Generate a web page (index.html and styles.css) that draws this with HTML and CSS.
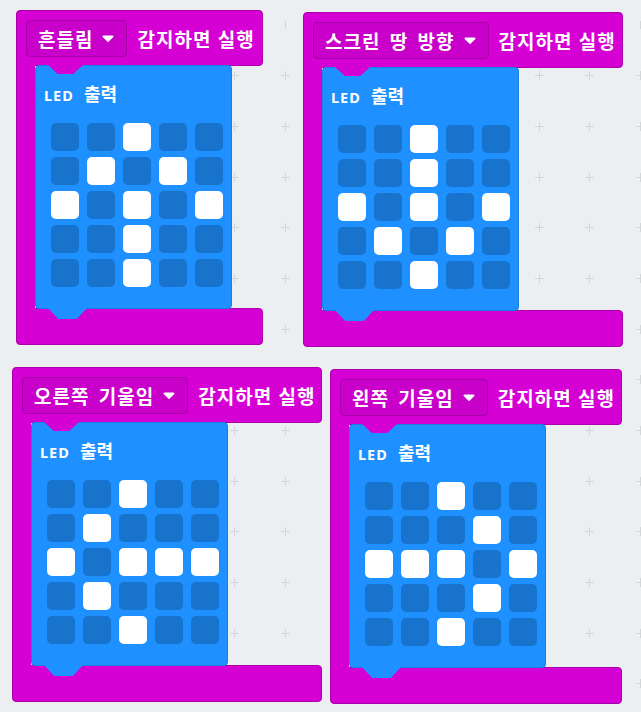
FILE: index.html
```html
<!DOCTYPE html>
<html lang="ko">
<head>
<meta charset="utf-8">
<title>micro:bit 입력 블록</title>
<link rel="stylesheet" href="styles.css">
</head>
<body>
<div class="workspace">

  <div class="block b1">
    <div class="head">
      <div class="dropdown"><span>흔들림</span><svg class="caret" width="12" height="7" viewBox="0 0 12 7"><path d="M1.5 0.5h9a1 1 0 0 1 .8 1.6l-4.5 4.3a1 1 0 0 1-1.6 0L.7 2.1A1 1 0 0 1 1.5.5z" fill="#fff"/></svg></div>
      <span class="label">감지하면 실행</span>
    </div>
    <div class="body">
      <div class="arm"></div>
      <div class="led">
        <div class="led-title"><span class="latin">LED</span> 출력</div>
        <div class="matrix">
          <i></i><i></i><i class="on"></i><i></i><i></i>
          <i></i><i class="on"></i><i></i><i class="on"></i><i></i>
          <i class="on"></i><i></i><i class="on"></i><i></i><i class="on"></i>
          <i></i><i></i><i class="on"></i><i></i><i></i>
          <i></i><i></i><i class="on"></i><i></i><i></i>
        </div>
      </div>
    </div>
    <div class="foot"></div>
  </div>

  <div class="block b2">
    <div class="head">
      <div class="dropdown"><span>스크린 땅 방향</span><svg class="caret" width="12" height="7" viewBox="0 0 12 7"><path d="M1.5 0.5h9a1 1 0 0 1 .8 1.6l-4.5 4.3a1 1 0 0 1-1.6 0L.7 2.1A1 1 0 0 1 1.5.5z" fill="#fff"/></svg></div>
      <span class="label">감지하면 실행</span>
    </div>
    <div class="body">
      <div class="arm"></div>
      <div class="led">
        <div class="led-title"><span class="latin">LED</span> 출력</div>
        <div class="matrix">
          <i></i><i></i><i class="on"></i><i></i><i></i>
          <i></i><i></i><i class="on"></i><i></i><i></i>
          <i class="on"></i><i></i><i class="on"></i><i></i><i class="on"></i>
          <i></i><i class="on"></i><i></i><i class="on"></i><i></i>
          <i></i><i></i><i class="on"></i><i></i><i></i>
        </div>
      </div>
    </div>
    <div class="foot"></div>
  </div>

  <div class="block b3">
    <div class="head">
      <div class="dropdown"><span>오른쪽 기울임</span><svg class="caret" width="12" height="7" viewBox="0 0 12 7"><path d="M1.5 0.5h9a1 1 0 0 1 .8 1.6l-4.5 4.3a1 1 0 0 1-1.6 0L.7 2.1A1 1 0 0 1 1.5.5z" fill="#fff"/></svg></div>
      <span class="label">감지하면 실행</span>
    </div>
    <div class="body">
      <div class="arm"></div>
      <div class="led">
        <div class="led-title"><span class="latin">LED</span> 출력</div>
        <div class="matrix">
          <i></i><i></i><i class="on"></i><i></i><i></i>
          <i></i><i class="on"></i><i></i><i></i><i></i>
          <i class="on"></i><i></i><i class="on"></i><i class="on"></i><i class="on"></i>
          <i></i><i class="on"></i><i></i><i></i><i></i>
          <i></i><i></i><i class="on"></i><i></i><i></i>
        </div>
      </div>
    </div>
    <div class="foot"></div>
  </div>

  <div class="block b4">
    <div class="head">
      <div class="dropdown"><span>왼쪽 기울임</span><svg class="caret" width="12" height="7" viewBox="0 0 12 7"><path d="M1.5 0.5h9a1 1 0 0 1 .8 1.6l-4.5 4.3a1 1 0 0 1-1.6 0L.7 2.1A1 1 0 0 1 1.5.5z" fill="#fff"/></svg></div>
      <span class="label">감지하면 실행</span>
    </div>
    <div class="body">
      <div class="arm"></div>
      <div class="led">
        <div class="led-title"><span class="latin">LED</span> 출력</div>
        <div class="matrix">
          <i></i><i></i><i class="on"></i><i></i><i></i>
          <i></i><i></i><i></i><i class="on"></i><i></i>
          <i class="on"></i><i class="on"></i><i class="on"></i><i></i><i class="on"></i>
          <i></i><i></i><i></i><i class="on"></i><i></i>
          <i></i><i></i><i class="on"></i><i></i><i></i>
        </div>
      </div>
    </div>
    <div class="foot"></div>
  </div>

</div>
</body>
</html>
```

FILE: styles.css
```css
html, body {
  margin: 0;
  padding: 0;
}

body {
  width: 641px;
  height: 712px;
  overflow: hidden;
  background-color: #eceff1;
  background-image: url("data:image/svg+xml,%3Csvg xmlns='http://www.w3.org/2000/svg' width='50.7' height='50.7'%3E%3Cpath d='M20.85 25.35h9M25.35 20.85v9' stroke='%23d2d6d9' stroke-width='1'/%3E%3C/svg%3E");
  background-size: 50.7px 50.7px;
  background-position: 6.85px -0.35px;
  font-family: "Noto Sans CJK KR", "Noto Sans", sans-serif;
}

.workspace {
  position: relative;
  width: 641px;
  height: 712px;
}

/* blocks sit at free positions on the workspace canvas */
.block {
  position: absolute;
  display: flex;
  flex-direction: column;
}

.b1 { left: 16px; top: 10px; width: 247px; }
.b2 { left: 303px; top: 12px; width: 320px; }
.b3 { left: 12px; top: 367px; width: 310px; }
.b4 { left: 330px; top: 369px; width: 292px; }

.head {
  height: 56px;
  box-sizing: border-box;
  background: #d400d4;
  border: 1px solid #a900a9;
  border-radius: 4px 4px 4px 0;
  display: flex;
  align-items: center;
  padding: 0 10px 0 9px;
  gap: 10px;
  color: #fff;
  font-size: 19px;
  font-weight: 700;
  white-space: nowrap;
}

.dropdown {
  height: 37px;
  box-sizing: border-box;
  display: flex;
  align-items: center;
  gap: 9px;
  padding: 0 12px 0 11px;
  background: #c900c9;
  border: 1px solid #a500a5;
  border-radius: 4px;
  letter-spacing: 1px;
  word-spacing: 3px;
}

.caret {
  display: block;
  flex: none;
}

.label {
  letter-spacing: 1px;
}

.body {
  display: flex;
  margin: -1px 0;
}

.arm {
  position: relative;
  width: 18px;
  background: #d400d4;
  border-left: 1px solid #a900a9;
}

.led {
  position: relative;
  z-index: 1;
  width: 197px;
  box-sizing: border-box;
  background: #1e90ff;
  border: 1px solid #1a7ee0;
  border-radius: 4px;
  padding: 13px 8px 21px 8px;
}

/* notch of the hat block reaching into the statement */
.led::before {
  content: "";
  position: absolute;
  top: -1px;
  left: 12px;
  width: 35px;
  height: 9px;
  background: #d400d4;
  clip-path: polygon(0 0, 100% 0, 72% 100%, 28% 100%);
}

/* tab under the statement */
.led::after {
  content: "";
  position: absolute;
  bottom: -11px;
  left: 12px;
  width: 39px;
  height: 11px;
  background: #1e90ff;
  clip-path: polygon(0 0, 100% 0, 74% 100%, 26% 100%);
}

.led-title {
  height: 28px;
  line-height: 28px;
  margin-bottom: 16px;
  color: #fff;
  font-size: 18px;
  font-weight: 700;
  white-space: nowrap;
}

.latin {
  font-family: "Noto Sans", sans-serif;
  font-size: 14.5px;
  letter-spacing: 1px;
  margin-right: 5px;
}

.matrix {
  display: grid;
  grid-template-columns: repeat(5, 28px);
  grid-auto-rows: 28px;
  column-gap: 8px;
  row-gap: 6px;
  margin-left: 7px;
}

.matrix i {
  display: block;
  background: #1873cc;
  border-radius: 5px;
}

.matrix i.on {
  background: #ffffff;
}

.foot {
  height: 37px;
  box-sizing: border-box;
  background: #d400d4;
  border: 1px solid #a900a9;
  border-radius: 0 4px 4px 4px;
}
```
